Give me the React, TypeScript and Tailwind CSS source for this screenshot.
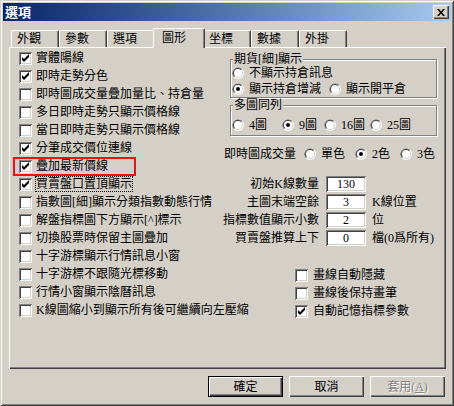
import React from "react";

function Check({ checked }: { checked?: boolean }) {
  return (
    <span className="block w-[13px] h-[13px] shrink-0 bg-white shadow-[inset_1px_1px_#808080,inset_-1px_-1px_#ffffff,inset_2px_2px_#404040,inset_-2px_-2px_#d4d0c8]">
      {checked && (
        <svg className="block" width="13" height="13" viewBox="0 0 13 13">
          <path d="M3 5L3 8L5 10L10 5L10 2L5 7Z" fill="#000" />
        </svg>
      )}
    </span>
  );
}

function Radio({ checked }: { checked?: boolean }) {
  return (
    <svg className="block shrink-0" width="12" height="12" viewBox="0 0 12 12">
      <circle cx="6" cy="6" r="6" fill="#ffffff" />
      <path d="M1.76 10.24A6 6 0 0 1 10.24 1.76Z" fill="#808080" />
      <circle cx="6" cy="6" r="5" fill="#d4d0c8" />
      <path d="M2.46 9.54A5 5 0 0 1 9.54 2.46Z" fill="#404040" />
      <circle cx="6" cy="6" r="4" fill="#ffffff" />
      {checked && <circle cx="6" cy="6" r="2" fill="#000000" />}
    </svg>
  );
}

function RadioItem({ label, checked, w }: { label: string; checked?: boolean; w?: string }) {
  return (
    <div className={`flex items-center gap-[5px] shrink-0 ${w ?? ""}`}>
      <Radio checked={checked} />
      <span className="whitespace-nowrap">{label}</span>
    </div>
  );
}

const leftItems: { t: string; c?: boolean }[] = [
  { t: "實體陽線", c: true },
  { t: "即時走勢分色", c: true },
  { t: "即時圖成交量疊加量比、持倉量" },
  { t: "多日即時走勢只顯示價格線" },
  { t: "當日即時走勢只顯示價格線" },
  { t: "分筆成交價位連線", c: true },
  { t: "疊加最新價線", c: true },
  { t: "買賣盤口置頂顯示", c: true },
  { t: "指數圖[細]顯示分類指數動態行情" },
  { t: "解盤指標圖下方顯示[^]標示" },
  { t: "切換股票時保留主圖疊加" },
  { t: "十字游標顯示行情訊息小窗" },
  { t: "十字游標不跟隨光標移動" },
  { t: "行情小窗顯示陰曆訊息" },
  { t: "K線圖縮小到顯示所有後可繼續向左壓縮" },
];

const tabs = ["外觀", "參數", "選項", "圖形", "坐標", "數據", "外掛"];

const inputs: { l: string; v: string; s?: string }[] = [
  { l: "初始K線數量", v: "130" },
  { l: "主圖末端空餘", v: "3", s: "K線位置" },
  { l: "指標數值顯示小數", v: "2", s: "位" },
  { l: "買賣盤推算上下", v: "0", s: "檔(0爲所有)" },
];

export default function App() {
  return (
    <div className="w-[454px] h-[406px] bg-[#d4d0c8] p-[3px] flex flex-col text-[12px] leading-[14px] text-black font-['Liberation_Serif','Noto_Sans_CJK_TC',serif] shadow-[inset_1px_1px_#d4d0c8,inset_-1px_-1px_#404040,inset_2px_2px_#ffffff,inset_-2px_-2px_#808080] overflow-hidden">
      {/* Title bar */}
      <div className="h-[18px] shrink-0 flex items-center justify-between pl-[2px] pr-[2px] bg-linear-to-r from-[#0a246a] to-[#a6caf0]">
        <span className="text-white font-bold text-[13px] leading-[14px] font-['Noto_Sans_CJK_TC',sans-serif]">選項</span>
        <div className="w-[16px] h-[14px] bg-[#d4d0c8] flex items-center justify-center shadow-[inset_1px_1px_#ffffff,inset_-1px_-1px_#404040,inset_-2px_-2px_#808080]">
          <svg width="8" height="7" viewBox="0 0 8 7" className="block">
            <path d="M0 0H2L4 2.5L6 0H8L5 3.5L8 7H6L4 4.5L2 7H0L3 3.5Z" fill="#000" />
          </svg>
        </div>
      </div>

      {/* Tabs */}
      <div className="relative z-10 flex items-end h-[20px] mt-[7px] ml-[8px] -mb-[1px] shrink-0">
        {tabs.map((t) =>
          t === "圖形" ? (
            <div
              key={t}
              className="relative z-10 w-[52px] h-[20px] -mx-[2px] pl-[8px] pt-[3px] leading-[12px] bg-[#d4d0c8] border-l border-t border-r border-l-white border-t-white border-r-[#404040] rounded-t-[2px] shadow-[inset_-1px_0_#808080]"
            >
              {t}
            </div>
          ) : (
            <div
              key={t}
              className="w-[48px] h-[17px] mb-[1px] pl-[5px] pt-[2px] leading-[12px] bg-[#d4d0c8] border-l border-t border-r border-l-white border-t-white border-r-[#404040] rounded-t-[2px] shadow-[inset_-1px_0_#808080]"
            >
              {t}
            </div>
          )
        )}
      </div>

      {/* Panel */}
      <div className="ml-[6px] w-[437px] h-[322px] shrink-0 bg-[#d4d0c8] flex pt-[2px] pl-[10px] shadow-[inset_1px_1px_#ffffff,inset_-1px_-1px_#404040,inset_-2px_-2px_#808080]">
        {/* Left column */}
        <div className="w-[205px] shrink-0 flex flex-col">
          {leftItems.map((it, i) => (
            <div key={i} className="relative h-[18px] flex items-center gap-[4px] whitespace-nowrap">
              <Check checked={it.c} />
              {i === 7 ? (
                <span className="-ml-[1px] border border-dotted border-black">{it.t}</span>
              ) : (
                <span>{it.t}</span>
              )}
              {i === 6 && (
                <div className="absolute -left-[6px] top-0 w-[123px] h-[19px] border-2 border-[#ee1111]" />
              )}
            </div>
          ))}
        </div>

        {/* Right column */}
        <div className="flex flex-col mt-[10px]">
          {/* 期貨 group */}
          <div className="ml-[6px] w-[207px] flex flex-col border border-[#808080] shadow-[1px_1px_#ffffff,inset_1px_1px_#ffffff]">
            <span className="self-start -mt-[7px] ml-[2px] px-[1px] h-[12px] leading-[12px] bg-[#d4d0c8]">期貨[細]顯示</span>
            <div className="h-[16px] pl-[1px] flex items-center">
              <RadioItem label="不顯示持倉訊息" />
            </div>
            <div className="h-[16px] pl-[1px] flex items-center">
              <RadioItem label="顯示持倉增減" checked w="w-[97px]" />
              <RadioItem label="顯示開平倉" />
            </div>
          </div>

          {/* 多圖同列 group */}
          <div className="mt-[7px] ml-[6px] w-[207px] flex flex-col border border-[#808080] shadow-[1px_1px_#ffffff,inset_1px_1px_#ffffff]">
            <span className="self-start -mt-[7px] ml-[2px] px-[1px] h-[12px] leading-[12px] bg-[#d4d0c8]">多圖同列</span>
            <div className="mt-[8px] mb-[4px] h-[12px] pl-[1px] flex items-center">
              <RadioItem label="4圖" w="w-[50px]" />
              <RadioItem label="9圖" checked w="w-[42px]" />
              <RadioItem label="16圖" w="w-[46px]" />
              <RadioItem label="25圖" />
            </div>
          </div>

          {/* 即時圖成交量 */}
          <div className="mt-[11px] h-[14px] flex items-center whitespace-nowrap">
            <span className="w-[80px] shrink-0">即時圖成交量</span>
            <RadioItem label="單色" w="w-[51px]" />
            <RadioItem label="2色" checked w="w-[45px]" />
            <RadioItem label="3色" />
          </div>

          {/* Inputs */}
          <div className="mt-[15px] flex flex-col gap-[2px]">
            {inputs.map((r) => (
              <div key={r.l} className="h-[16px] flex items-center">
                <div className="w-[95px] shrink-0 flex justify-end">
                  <span className="whitespace-nowrap shrink-0">{r.l}</span>
                </div>
                <div className="ml-[7px] w-[40px] h-[16px] shrink-0 bg-white flex items-center justify-center shadow-[inset_1px_1px_#808080,inset_-1px_-1px_#ffffff,inset_2px_2px_#404040,inset_-2px_-2px_#d4d0c8]">
                  {r.v}
                </div>
                {r.s && <span className="ml-[6px] whitespace-nowrap">{r.s}</span>}
              </div>
            ))}
          </div>

          {/* Right checkboxes */}
          <div className="mt-[20px] pl-[71px] flex flex-col">
            {[
              { t: "畫線自動隱藏" },
              { t: "畫線後保持畫筆" },
              { t: "自動記憶指標參數", c: true },
            ].map((it) => (
              <div key={it.t} className="h-[18px] flex items-center gap-[5px] whitespace-nowrap">
                <Check checked={it.c} />
                <span>{it.t}</span>
              </div>
            ))}
          </div>
        </div>
      </div>

      {/* Buttons */}
      <div className="mt-[7px] flex justify-end gap-[6px] pr-[6px]">
        <div className="w-[75px] h-[21px] border border-black flex items-center justify-center shadow-[inset_1px_1px_#ffffff,inset_-1px_-1px_#404040,inset_-2px_-2px_#808080]">
          確定
        </div>
        <div className="w-[75px] h-[21px] flex items-center justify-center shadow-[inset_1px_1px_#ffffff,inset_-1px_-1px_#404040,inset_-2px_-2px_#808080]">
          取消
        </div>
        <div className="w-[75px] h-[21px] flex items-center justify-center text-[#808080] [text-shadow:1px_1px_#ffffff] shadow-[inset_1px_1px_#ffffff,inset_-1px_-1px_#404040,inset_-2px_-2px_#808080]">
          套用(<u>A</u>)
        </div>
      </div>
    </div>
  );
}
